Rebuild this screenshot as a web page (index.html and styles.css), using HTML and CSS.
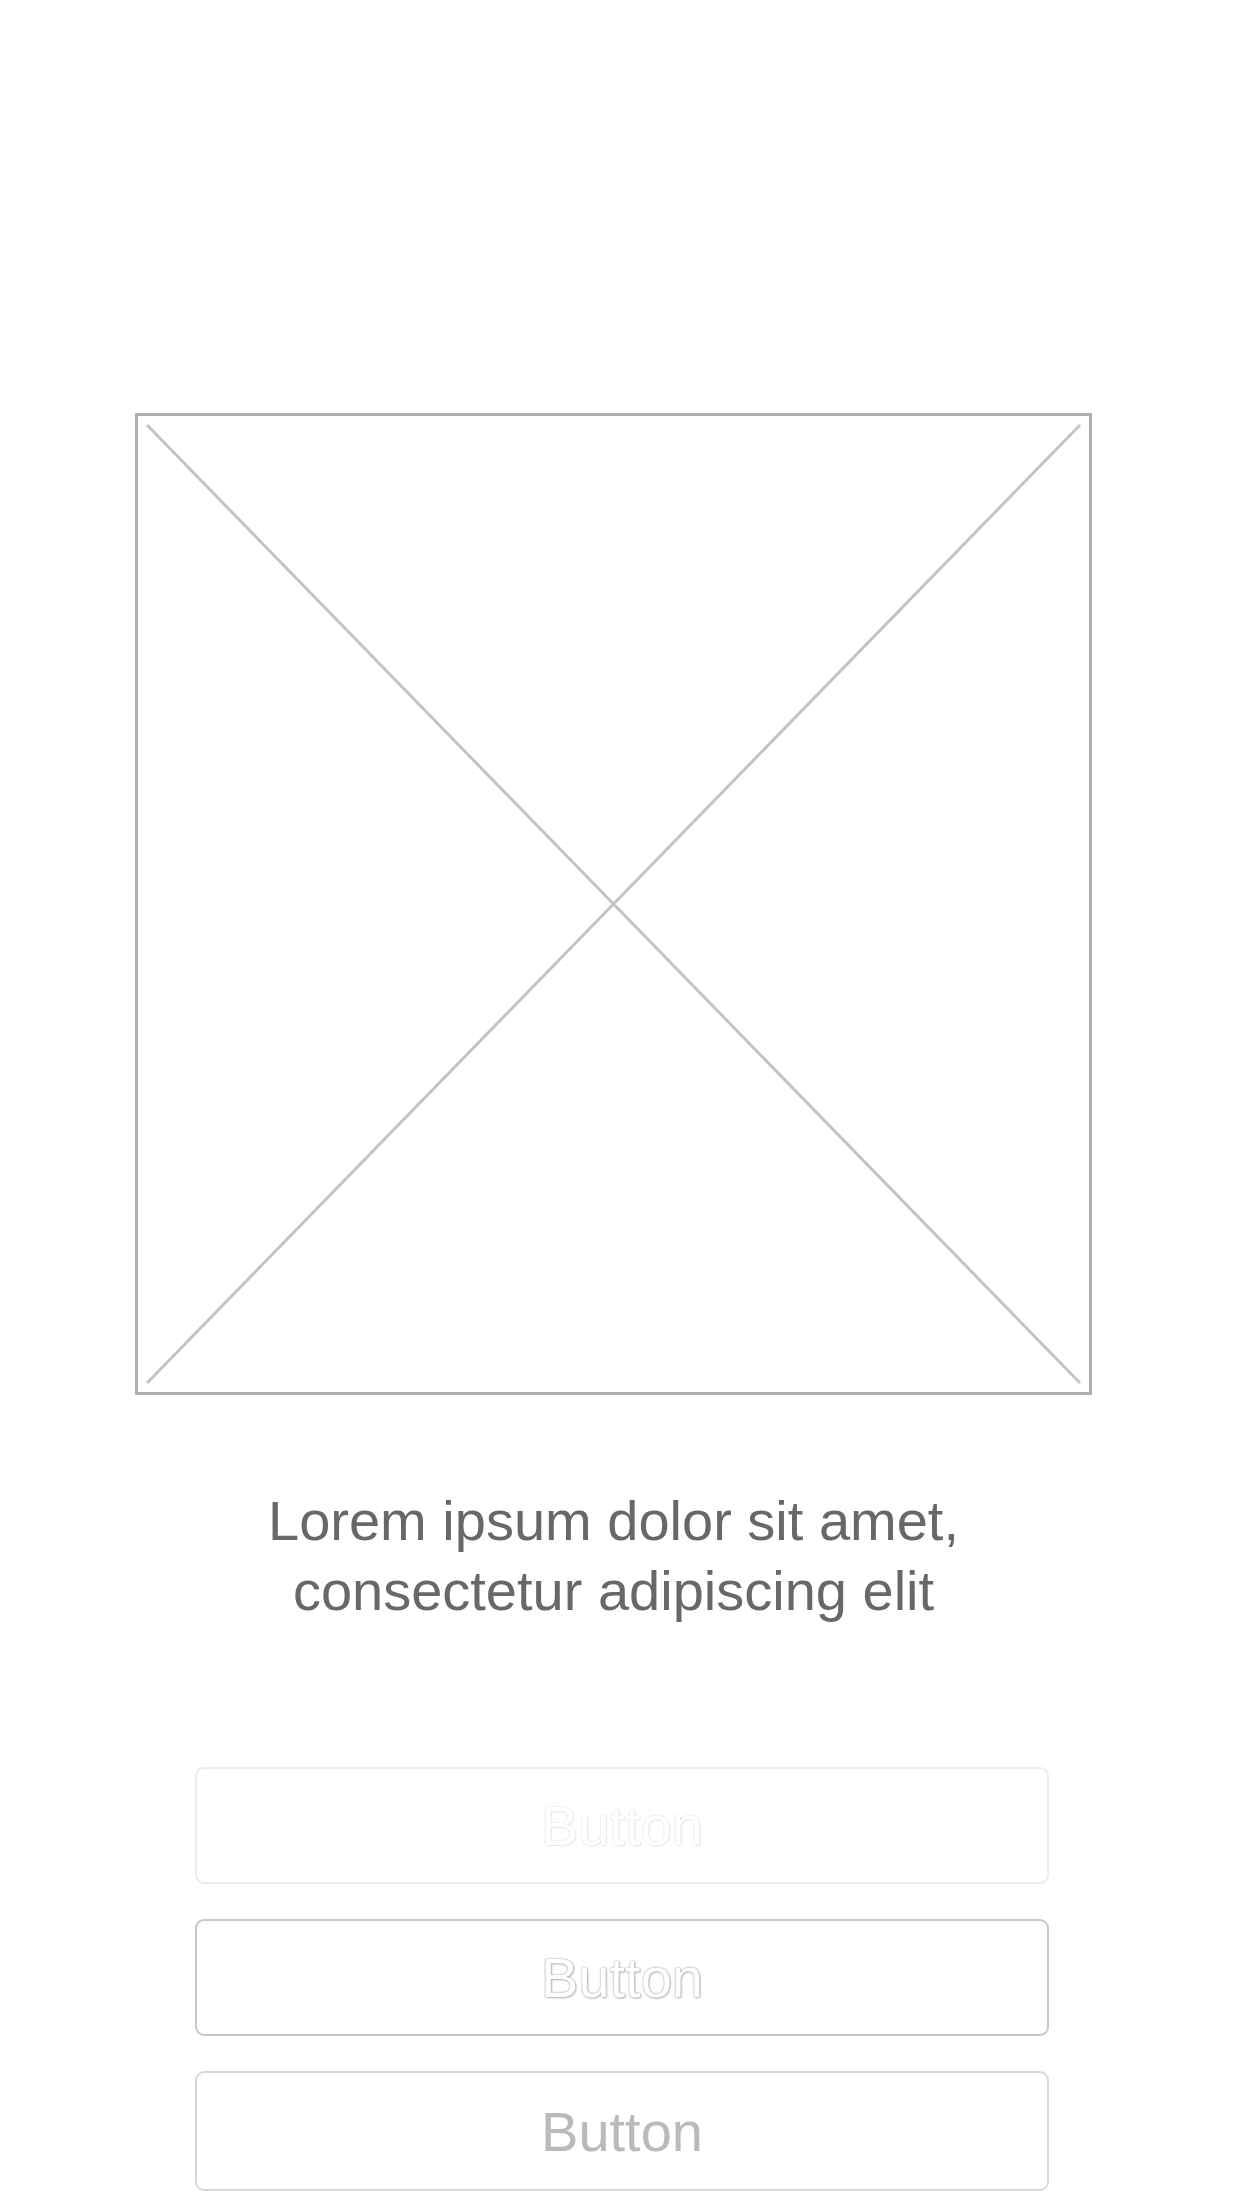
FILE: index.html
```html
<!DOCTYPE html>
<html>
<head>
<meta charset="utf-8">
<link rel="stylesheet" href="styles.css">
</head>
<body>
<main class="screen">
  <div class="placeholder">
    <svg class="cross" viewBox="0 0 957 982" preserveAspectRatio="none">
      <line x1="12" y1="12" x2="945" y2="970" />
      <line x1="945" y1="12" x2="12" y2="970" />
    </svg>
  </div>
  <p class="caption">Lorem ipsum dolor sit amet,<br>consectetur adipiscing elit</p>
  <div class="buttons">
    <div class="btn btn-faint">Button</div>
    <div class="btn btn-outline">Button</div>
    <div class="btn btn-plain">Button</div>
  </div>
</main>
</body>
</html>
```

FILE: styles.css
```css
html, body {
  margin: 0;
  padding: 0;
  background: #ffffff;
}
.screen {
  width: 1242px;
  height: 2208px;
  overflow: hidden;
  display: flex;
  flex-direction: column;
  padding-top: 413px;
  box-sizing: border-box;
  font-family: "Liberation Sans", Arial, sans-serif;
}
.placeholder {
  margin-left: 135px;
  width: 957px;
  height: 982px;
  box-sizing: border-box;
  border: 3px solid #b0b0b0;
  position: relative;
}
.cross {
  position: absolute;
  left: -3px;
  top: -3px;
  width: 957px;
  height: 982px;
}
.cross line {
  stroke: #c4c4c4;
  stroke-width: 3;
}
.caption {
  margin: 91px 0 0 135px;
  width: 957px;
  text-align: center;
  font-size: 56px;
  line-height: 70px;
  color: #686868;
  font-weight: 400;
  letter-spacing: 0;
}
.buttons {
  margin: 141px 0 0 195px;
  width: 854px;
  display: flex;
  flex-direction: column;
  gap: 35px;
}
.btn {
  height: 117px;
  box-sizing: border-box;
  border-radius: 9px;
  display: flex;
  align-items: center;
  justify-content: center;
  font-size: 56px;
  letter-spacing: 0;
}
.btn-faint {
  border: 2px solid #ececec;
  color: #ffffff;
  text-shadow: 0 0 2px #dcdcdc, 0 0 1px #dcdcdc, 1px 1px 1px #eeeeee;
}
.btn-outline {
  border: 2px solid #c8c8c8;
  color: #ffffff;
  text-shadow: 0 0 2px #a8a8a8, 0 0 1px #a0a0a0, 1px 1px 2px #c0c0c0;
}
.btn-plain {
  border: 2px solid #d8d8d8;
  color: #bababa;
  font-weight: 400;
  height: 120px;
}
```
